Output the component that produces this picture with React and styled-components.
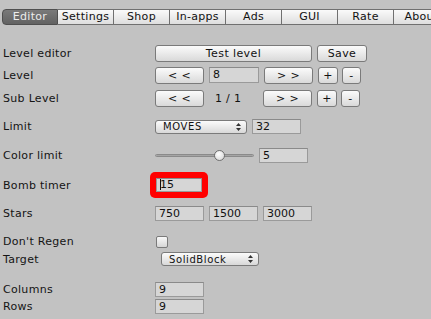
import React from "react";
import styled, { createGlobalStyle } from "styled-components";

const Global = createGlobalStyle`
  html, body { margin: 0; padding: 0; background: #c2c2c2; }
  body { width: 431px; height: 319px; overflow: hidden; font-family: "DejaVu Sans", "Liberation Sans", sans-serif; font-size: 11px; color: #111; }
`;

const Page = styled.div`
  padding: 9px 0 0 0;
  display: flex;
  flex-direction: column;
`;

const TabBar = styled.div`
  display: flex;
  margin-left: 2px;
  height: 16px;
  white-space: nowrap;
  overflow: hidden;
`;

const Tab = styled.div`
  flex: 0 0 56px;
  box-sizing: border-box;
  height: 16px;
  line-height: 14px;
  text-align: center;
  font-size: 11px;
  border: 1px solid ${(p) => (p.$active ? "#4f4f4f" : "#707070")};
  border-left: ${(p) => (p.$first ? undefined : "none")};
  border-radius: ${(p) => (p.$first ? "4px 0 0 4px" : "0")};
  background: ${(p) =>
    p.$active
      ? "linear-gradient(#7a7a7a, #626262)"
      : "linear-gradient(#fafafa, #dedede)"};
  color: ${(p) => (p.$active ? "#ececec" : "#111")};
  letter-spacing: 0.3px;
`;

const Row = styled.div`
  display: grid;
  grid-template-columns: 152px 1fr;
  align-items: center;
  height: ${(p) => p.$h}px;
  margin-top: ${(p) => p.$mt}px;
  padding-left: 3px;
`;

const Label = styled.div`
  font-size: 11px;
  letter-spacing: 0.3px;
  color: #141414;
  white-space: nowrap;
`;

const Controls = styled.div`
  display: flex;
  align-items: center;
  gap: ${(p) => (p.$gap != null ? p.$gap : 5)}px;
`;

const Button = styled.div`
  box-sizing: border-box;
  width: ${(p) => p.$w}px;
  height: 17px;
  line-height: 15px;
  text-align: center;
  border: 1px solid #7a7a7a;
  border-radius: 3px;
  background: linear-gradient(#fbfbfb, #d9d9d9);
  font-size: 11px;
  letter-spacing: 0.4px;
  color: #111;
`;

const Field = styled.div`
  box-sizing: border-box;
  width: ${(p) => p.$w || 49}px;
  height: ${(p) => p.$h || 15}px;
  line-height: ${(p) => (p.$h || 15) - 2}px;
  padding-left: 3px;
  border: 1px solid #9a9a9a;
  border-top-color: #8a8a8a;
  background: #d6d6d6;
  font-size: 11px;
  color: #111;
`;

const Caret = styled.span`
  display: inline-block;
  width: 1px;
  height: 11px;
  background: #111;
  vertical-align: -2px;
  margin-right: -1px;
`;

const PlainValue = styled.div`
  width: 49px;
  padding-left: 6px;
  box-sizing: border-box;
  font-size: 11px;
  letter-spacing: 0.3px;
`;

const Popup = styled.div`
  box-sizing: border-box;
  width: ${(p) => p.$w}px;
  height: ${(p) => p.$h || 15}px;
  margin-left: ${(p) => p.$ml || 0}px;
  display: flex;
  align-items: center;
  justify-content: space-between;
  padding: 0 5px 0 7px;
  border: 1px solid #7a7a7a;
  border-radius: 3px;
  background: linear-gradient(#fbfbfb, #d8d8d8);
  font-size: 10px;
  letter-spacing: 0.6px;
  color: #111;
`;

const Arrows = styled.svg`
  display: block;
`;

const Slider = styled.div`
  position: relative;
  width: 99px;
  height: 12px;
  display: flex;
  align-items: center;
`;

const Track = styled.div`
  width: 100%;
  height: 3px;
  border-radius: 2px;
  background: linear-gradient(#8c8c8c, #bdbdbd);
  border: 1px solid #8a8a8a;
  box-sizing: border-box;
`;

const Thumb = styled.div`
  position: absolute;
  left: 59px;
  top: 0;
  width: 11px;
  height: 11px;
  box-sizing: border-box;
  border-radius: 50%;
  border: 1px solid #6f6f6f;
  background: radial-gradient(circle at 40% 35%, #ffffff, #d0d0d0);
`;

const Highlight = styled.div`
  margin-left: -5px;
  padding: 6px;
  background: #ff0000;
  border-radius: 5px;
  width: fit-content;
`;

const Checkbox = styled.div`
  box-sizing: border-box;
  width: 12px;
  height: 12px;
  margin-left: 1px;
  border: 1px solid #7a7a7a;
  border-radius: 2px;
  background: linear-gradient(#f8f8f8, #d6d6d6);
`;

const UpDown = () => (
  <Arrows width="5" height="8" viewBox="0 0 5 8">
    <path d="M2.5 0 L5 3 L0 3 Z M2.5 8 L5 5 L0 5 Z" fill="#333" />
  </Arrows>
);

const tabs = ["Editor", "Settings", "Shop", "In-apps", "Ads", "GUI", "Rate", "About"];

export default function App() {
  return (
    <>
      <Global />
      <Page>
        <TabBar>
          {tabs.map((t, i) => (
            <Tab key={t} $active={i === 0} $first={i === 0}>
              {t}
            </Tab>
          ))}
        </TabBar>

        <Row $mt={20} $h={17}>
          <Label>Level editor</Label>
          <Controls>
            <Button $w={157}>Test level</Button>
            <Button $w={50}>Save</Button>
          </Controls>
        </Row>

        <Row $mt={4} $h={18}>
          <Label>Level</Label>
          <Controls>
            <Button $w={49}>&lt; &lt;</Button>
            <Field $w={50} $h={16}>8</Field>
            <Button $w={49}>&gt; &gt;</Button>
            <Controls $gap={4}>
              <Button $w={20}>+</Button>
              <Button $w={19}>-</Button>
            </Controls>
          </Controls>
        </Row>

        <Row $mt={6} $h={17}>
          <Label>Sub Level</Label>
          <Controls>
            <Button $w={49}>&lt; &lt;</Button>
            <PlainValue>1 / 1</PlainValue>
            <Button $w={49}>&gt; &gt;</Button>
            <Controls $gap={4}>
              <Button $w={20}>+</Button>
              <Button $w={19}>-</Button>
            </Controls>
          </Controls>
        </Row>

        <Row $mt={12} $h={15}>
          <Label>Limit</Label>
          <Controls>
            <Popup $w={92} $h={14}>
              MOVES
              <UpDown />
            </Popup>
            <Field>32</Field>
          </Controls>
        </Row>

        <Row $mt={14} $h={15}>
          <Label>Color limit</Label>
          <Controls>
            <Slider>
              <Track />
              <Thumb />
            </Slider>
            <Field>5</Field>
          </Controls>
        </Row>

        <Row $mt={9} $h={26}>
          <Label>Bomb timer</Label>
          <Highlight>
            <Field $w={46} $h={14}>
              <Caret />
              15
            </Field>
          </Highlight>
        </Row>

        <Row $mt={8} $h={15}>
          <Label>Stars</Label>
          <Controls>
            <Field>750</Field>
            <Field>1500</Field>
            <Field>3000</Field>
          </Controls>
        </Row>

        <Row $mt={14} $h={12}>
          <Label>Don't Regen</Label>
          <Controls>
            <Checkbox />
          </Controls>
        </Row>

        <Row $mt={5} $h={14}>
          <Label>Target</Label>
          <Controls>
            <Popup $w={98} $h={14} $ml={6}>
              SolidBlock
              <UpDown />
            </Popup>
          </Controls>
        </Row>

        <Row $mt={16} $h={14}>
          <Label>Columns</Label>
          <Controls>
            <Field>9</Field>
          </Controls>
        </Row>

        <Row $mt={3} $h={15}>
          <Label>Rows</Label>
          <Controls>
            <Field>9</Field>
          </Controls>
        </Row>
      </Page>
    </>
  );
}
